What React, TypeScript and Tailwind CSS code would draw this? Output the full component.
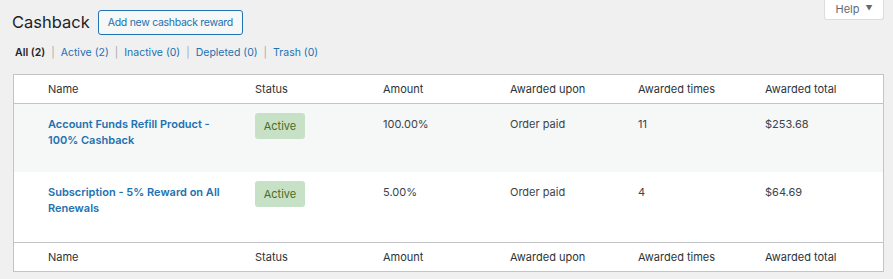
import React from 'react';

const cols = 'grid grid-cols-[207px_128px_127px_128px_127px_1fr] pl-[34px]';

const rows = [
  {
    name: 'Account Funds Refill Product - 100% Cashback',
    amount: '100.00%',
    upon: 'Order paid',
    times: '11',
    total: '$253.68',
    bg: 'bg-[#f6f7f7]',
    h: 'h-[68px]',
  },
  {
    name: 'Subscription - 5% Reward on All Renewals',
    amount: '5.00%',
    upon: 'Order paid',
    times: '4',
    total: '$64.69',
    bg: 'bg-white',
    h: 'h-[70px]',
  },
];

function HeaderRow({ top }: { top?: boolean }) {
  return (
    <div
      className={`${cols} h-[29px] items-center text-[11px] text-[#2c3338] ${
        top ? 'border-b border-[#c3c4c7]' : 'border-t border-[#c3c4c7]'
      }`}
    >
      <div>Name</div>
      <div>Status</div>
      <div>Amount</div>
      <div>Awarded upon</div>
      <div>Awarded times</div>
      <div>Awarded total</div>
    </div>
  );
}

function Sep() {
  return <span className="mx-[6px] text-[#a7aaad]">|</span>;
}

export default function App() {
  return (
    <div className="relative min-h-[279px] w-[893px] bg-[#f0f0f1] font-['Inter',sans-serif] text-[#3c434a]">
      {/* Help tab */}
      <button className="absolute right-[9px] top-0 flex h-[20px] w-[60px] items-center justify-center gap-[6px] rounded-b-[3px] border border-t-0 border-[#dcdcde] bg-white text-[11px] text-[#646970]">
        Help
        <span className="text-[7px]">▼</span>
      </button>

      <div className="pl-[12px] pr-[9px] pt-[10px]">
        <div className="flex items-center gap-[8px]">
          <h1 className="text-[16.5px] leading-[25px] text-[#1d2327]">Cashback</h1>
          <button className="h-[25px] rounded-[3px] border border-[#2271b1] bg-[#f6f7f7] px-[9px] text-[10.5px] tracking-[-0.3px] text-[#2271b1]">
            Add new cashback reward
          </button>
        </div>

        <div className="mt-[10px] flex items-center pl-[3px] text-[10.5px] leading-[16px]">
          <span className="font-semibold text-[#1d2327]">All (2)</span>
          <Sep />
          <span className="text-[#2271b1]">Active (2)</span>
          <Sep />
          <span className="text-[#2271b1]">Inactive (0)</span>
          <Sep />
          <span className="text-[#2271b1]">Depleted (0)</span>
          <Sep />
          <span className="text-[#2271b1]">Trash (0)</span>
        </div>

        <div className="ml-[1px] mt-[13px] border border-[#c3c4c7] bg-white">
          <HeaderRow top />
          {rows.map((r) => (
            <div key={r.name} className={`${cols} ${r.h} ${r.bg} text-[11px]`}>
              <div className="pr-[24px] pt-[12px] text-[11px] font-semibold leading-[16px] text-[#2271b1]">
                {r.name}
              </div>
              <div className="pt-[9px]">
                <span className="inline-flex h-[26px] w-[50px] items-center justify-center rounded-[3px] bg-[#c6e1c6] text-[#4c6b24]">
                  Active
                </span>
              </div>
              <div className="pt-[12px] leading-[16px]">{r.amount}</div>
              <div className="pt-[12px] leading-[16px]">{r.upon}</div>
              <div className="pt-[12px] leading-[16px]">{r.times}</div>
              <div className="pt-[12px] leading-[16px]">{r.total}</div>
            </div>
          ))}
          <HeaderRow />
        </div>
      </div>
    </div>
  );
}
